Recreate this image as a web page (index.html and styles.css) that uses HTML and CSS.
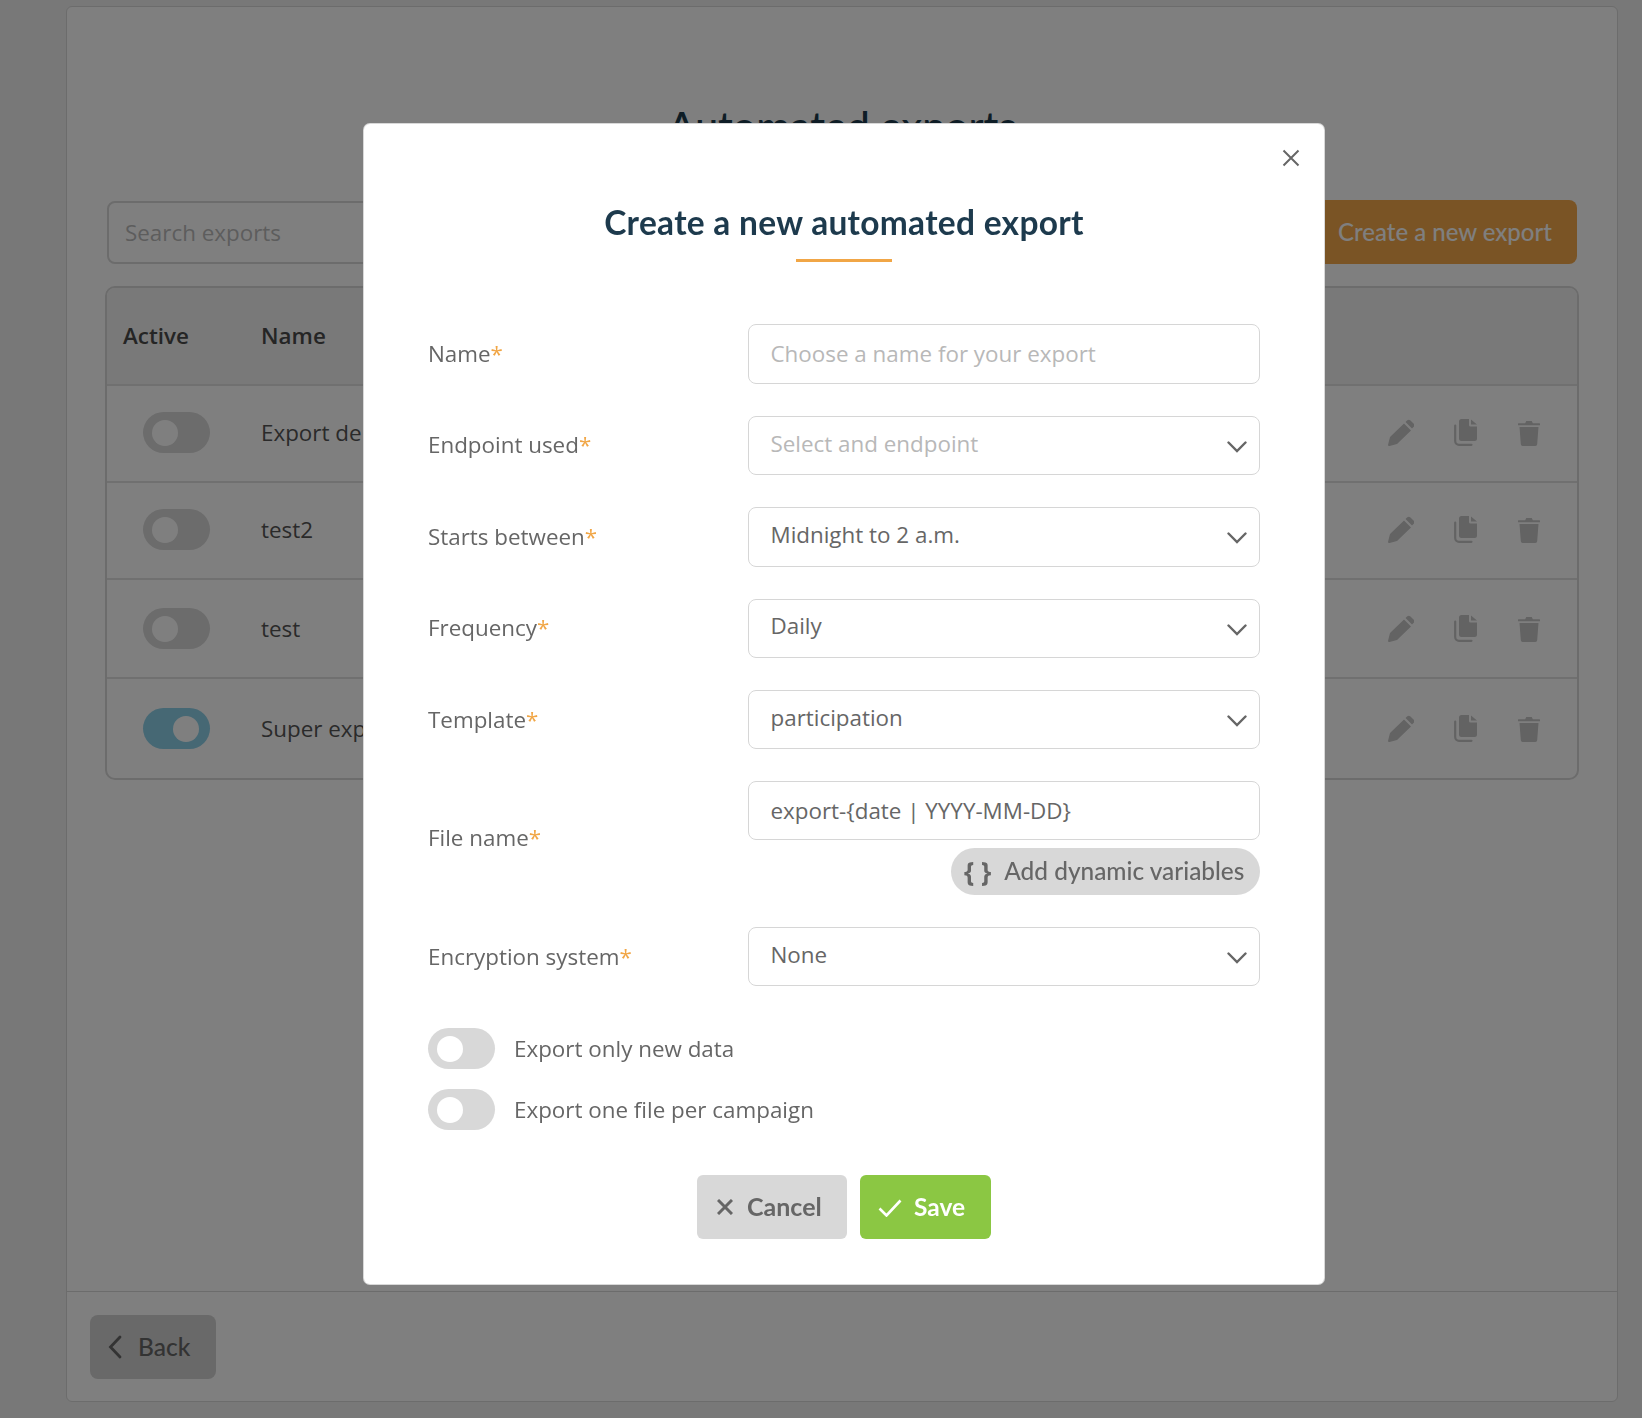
FILE: index.html
```html
<!DOCTYPE html>
<html lang="en">
<head>
<meta charset="utf-8">
<title>Automated exports</title>
<link rel="stylesheet" href="styles.css">
</head>
<body>
<svg class="defs" width="0" height="0" aria-hidden="true">
  <symbol id="pen" viewBox="0 0 26 27"><path d="M1.500 27a1.200 1.200 0 0 1-1.400-1.400L2 18 16 4.500l7 7L9 25zM17.500 3l1.500-1.500a2.500 2.500 0 0 1 3.500 0l3 3a2.500 2.500 0 0 1 0 3.500L24 9.500z" fill="currentColor"/></symbol>
  <symbol id="copy" viewBox="0 0 24 27"><path d="M7.500 0H15v6a1.500 1.500 0 0 0 1.500 1.500H23V19.500a2.500 2.500 0 0 1-2.500 2.500h-13A2.500 2.500 0 0 1 5 19.500v-17A2.500 2.500 0 0 1 7.500 0zM17 .5L23 5.500h-6z" fill="currentColor"/><path d="M1.200 6.500v15.500a3.800 3.800 0 0 0 3.800 3.800h12.500" fill="none" stroke="currentColor" stroke-width="2.200" stroke-linecap="round"/></symbol>
  <symbol id="trash" viewBox="0 0 22 26"><path d="M.5 3.200h6.700L8.200 1h5.600l1 2.200h6.700a.6.6 0 0 1 .5.600v1.500H0V3.800a.6.6 0 0 1 .5-.6zM1.500 7h19l-1.300 17.200a1.900 1.900 0 0 1-1.900 1.800H4.700a1.900 1.900 0 0 1-1.900-1.800z" fill="currentColor"/></symbol>
  <symbol id="chev" viewBox="0 0 20 12"><path d="M1.500 1.500L10 10l8.500-8.500" fill="none" stroke="currentColor" stroke-width="2.400" stroke-linecap="round"/></symbol>
</svg>

<div class="page">
  <main class="panel">
    <div class="panel-body">
      <h1 class="page-title">Automated exports</h1>
      <div class="toolbar">
        <div class="search">Search exports</div>
        <button class="create">Create a new export</button>
      </div>
      <div class="table">
        <div class="thead"><span class="col-active">Active</span><span>Name</span></div>
        <div class="row">
          <span class="col-active"><span class="toggle"></span></span>
          <span class="row-name">Export de</span>
          <span class="actions"><svg class="ic-pen"><use href="#pen"/></svg><svg class="ic-copy"><use href="#copy"/></svg><svg class="ic-trash"><use href="#trash"/></svg></span>
        </div>
        <div class="row">
          <span class="col-active"><span class="toggle"></span></span>
          <span class="row-name">test2</span>
          <span class="actions"><svg class="ic-pen"><use href="#pen"/></svg><svg class="ic-copy"><use href="#copy"/></svg><svg class="ic-trash"><use href="#trash"/></svg></span>
        </div>
        <div class="row row-tall">
          <span class="col-active"><span class="toggle"></span></span>
          <span class="row-name">test</span>
          <span class="actions"><svg class="ic-pen"><use href="#pen"/></svg><svg class="ic-copy"><use href="#copy"/></svg><svg class="ic-trash"><use href="#trash"/></svg></span>
        </div>
        <div class="row row-tall row-last">
          <span class="col-active"><span class="toggle toggle-on"></span></span>
          <span class="row-name">Super exp</span>
          <span class="actions"><svg class="ic-pen"><use href="#pen"/></svg><svg class="ic-copy"><use href="#copy"/></svg><svg class="ic-trash"><use href="#trash"/></svg></span>
        </div>
      </div>
    </div>
    <footer class="panel-foot">
      <button class="back"><svg class="back-ic" viewBox="0 0 14 24"><path d="M12 2L2.500 12l9.500 10" fill="none" stroke="currentColor" stroke-width="2.800" stroke-linecap="round"/></svg>Back</button>
    </footer>
  </main>
</div>

<div class="overlay"></div>

<section class="modal">
  <button class="close" aria-label="Close"><svg viewBox="0 0 18 18" width="18" height="18"><path d="M1.500 1.500l15 15M16.500 1.500l-15 15" stroke="currentColor" stroke-width="2" fill="none"/></svg></button>
  <h2 class="modal-title">Create a new automated export</h2>
  <div class="title-rule"></div>
  <form class="form">
    <label class="lbl">Name<i>*</i></label>
    <div class="field field-60 ph raised">Choose a name for your export</div>

    <label class="lbl lbl-high">Endpoint used<i>*</i></label>
    <div class="field ph sel">Select and endpoint<svg class="chev"><use href="#chev"/></svg></div>

    <label class="lbl">Starts between<i>*</i></label>
    <div class="field sel">Midnight to 2 a.m.<svg class="chev"><use href="#chev"/></svg></div>

    <label class="lbl">Frequency<i>*</i></label>
    <div class="field sel">Daily<svg class="chev"><use href="#chev"/></svg></div>

    <label class="lbl">Template<i>*</i></label>
    <div class="field sel">participation<svg class="chev"><use href="#chev"/></svg></div>

    <label class="lbl">File name<i>*</i></label>
    <div class="file-stack">
      <div class="field">export-{date | YYYY-MM-DD}</div>
      <button type="button" class="dyn"><b class="dyn-ic">{ }</b>Add dynamic variables</button>
    </div>

    <label class="lbl">Encryption system<i>*</i></label>
    <div class="field sel">None<svg class="chev"><use href="#chev"/></svg></div>
  </form>
  <div class="switches">
    <div class="switch-row"><span class="toggle"></span>Export only new data</div>
    <div class="switch-row"><span class="toggle"></span>Export one file per campaign</div>
  </div>
  <div class="buttons">
    <button class="btn btn-cancel"><svg viewBox="0 0 16 16" width="16" height="16"><path d="M1 1l14 14M15 1L1 15" stroke="currentColor" stroke-width="3" fill="none"/></svg>Cancel</button>
    <button class="btn btn-save"><svg viewBox="0 0 24 18" width="24" height="18"><path d="M1.500 9.500L8.500 16.500 22.500 1.500" stroke="currentColor" stroke-width="2.600" fill="none"/></svg>Save</button>
  </div>
</section>
</body>
</html>
```
FILE: styles.css
```css
* { box-sizing: border-box; }
html, body { margin: 0; height: 100%; }
body { background: #f0f0f0; font-family: "Open Sans", "Liberation Sans", sans-serif; color: #666; font-size: 22.400px; overflow: hidden; }
button { font: inherit; border: 0; cursor: pointer; }
.defs { position: absolute; }

.page { height: 1418px; padding: 6px 24px 16px 66px; }
.panel { height: 100%; background: #fff; border: 1px solid #d8d8d8; border-radius: 6px; display: flex; flex-direction: column; }
.panel-body { flex: 1; padding: 0 38px; min-height: 0; }
.page-title { margin: 99px 0 0; height: 94px; text-align: center; font: 500 41px/40px "Lato", sans-serif; color: #1d3a4d; }

.toolbar { display: flex; justify-content: space-between; align-items: flex-start; height: 64px; margin-left: 2px; width: 1470px; }
.search { width: 600px; height: 63px; margin-top: 1px; border: 2px solid #d8d8d8; border-radius: 8px; padding: 0 16px; display: flex; align-items: center; color: #bbb; }
.create { width: 300px; height: 64px; padding: 0 25px 2px 0; background: #f4a84a; color: #fff; border-radius: 8px; font: 500 24px "Lato", sans-serif; text-align: right; }

.table { margin-top: 22px; width: 1474px; border: 2px solid #d8d8d8; border-radius: 10px; overflow: hidden; }
.thead { height: 96px; padding-bottom: 2px; background: #f2f2f2; display: flex; align-items: center; font-weight: 600; color: #4a4a4a; }
.col-active { width: 154px; padding-left: 16px; flex: none; }
.row { height: 97px; padding-bottom: 2px; border-top: 2px solid #e0e0e0; display: flex; align-items: center; }
.row-tall { height: 99px; padding-bottom: 0; }
.row-last { height: 101px; }
.row-name { color: #555; }
.row .col-active { padding-left: 36px; }
.actions { margin-left: auto; display: flex; align-items: center; gap: 40px; padding-right: 37px; color: #c6c6c6; }
.actions svg { display: block; }
.ic-pen { width: 26px; height: 27px; }
.ic-copy { width: 24px; height: 27px; }
.ic-trash { width: 22px; height: 26px; }

.toggle { display: block; width: 67px; height: 41px; border-radius: 21px; background: #d8d8d8; position: relative; flex: none; }
.toggle::after { content: ""; position: absolute; top: 8px; left: 9px; width: 26px; height: 26px; border-radius: 50%; background: #fff; }
.toggle-on { background: #8cd0e8; }
.toggle-on::after { left: 30px; }

.panel-foot { height: 110px; flex: none; border-top: 1px solid #d8d8d8; padding: 23px 0 0 23px; }
.back { width: 126px; height: 64px; border-radius: 8px; background: #d2d2d2; color: #666; display: flex; align-items: center; padding: 0 0 2px 18px; font: 500 24.500px "Lato", sans-serif; }
.back-ic { width: 14px; height: 24px; margin: 2px 16px 0 0; }

.overlay { position: fixed; inset: 0; background: rgba(0, 0, 0, .5); }

.modal { position: absolute; left: 364px; top: 124px; width: 960px; height: 1160px; background: #fff; border-radius: 6px; padding: 0 64px; box-shadow: 0 0 0 1px #d8d8d8; }
.close { position: absolute; top: 25px; right: 24px; width: 18px; height: 18px; padding: 0; background: none; color: #666; }
.close svg { display: block; }
.modal-title { margin: 0; padding-top: 75px; text-align: center; letter-spacing: .29px; font: 700 33.500px/46px "Lato", sans-serif; color: #1d3a4d; }
.title-rule { width: 96px; height: 3px; background: #f1a646; margin: 14px 0 0 368px; }

.form { display: grid; grid-template-columns: 320px 512px; row-gap: 32px; margin-top: 62px; align-items: center; }
.lbl { color: #666; line-height: 30px; }
.lbl i { color: #f1a646; font-style: normal; }
.lbl-high { padding-bottom: 2px; }
.field { position: relative; height: 59.300px; border: 1px solid #d6d6d6; border-radius: 8px; padding: 0 21.500px; display: flex; align-items: center; color: #666; background: #fff; }
.field-60 { height: 60px; }
.ph { color: #b8b8b8; }
.raised { padding-bottom: 2px; }
.sel { padding-bottom: 5px; }
.chev { position: absolute; right: 12px; top: 24px; width: 20px; height: 12px; color: #666; }
.file-stack { display: flex; flex-direction: column; align-items: flex-end; gap: 8px; }
.file-stack .field { width: 100%; }
.dyn { height: 46.500px; width: 309px; border-radius: 24px; background: #d8d8d8; color: #666; display: flex; align-items: center; padding: 0 0 2px 13px; font: 500 24.400px "Lato", sans-serif; }
.dyn-ic { font: 700 26px "Open Sans", sans-serif; margin: 0 13px 0 0; }

.switches { margin-top: 42px; display: flex; flex-direction: column; gap: 20px; }
.switch-row { display: flex; align-items: center; gap: 19px; color: #666; }

.buttons { display: flex; gap: 13px; margin: 45px 0 0 269px; }
.btn { height: 64px; border-radius: 6px; display: flex; align-items: center; padding-bottom: 2px; font: 700 24.500px "Lato", sans-serif; }
.btn-cancel { width: 150px; background: #d8d8d8; color: #666; padding: 0 0 3px 20px; font-size: 25px; }
.btn-cancel svg { margin: 3px 14px 0 0; }
.btn-save { width: 131px; background: #8bc743; color: #fff; padding-left: 18px; }
.btn-save svg { margin: 2px 12px 0 0; }
```
